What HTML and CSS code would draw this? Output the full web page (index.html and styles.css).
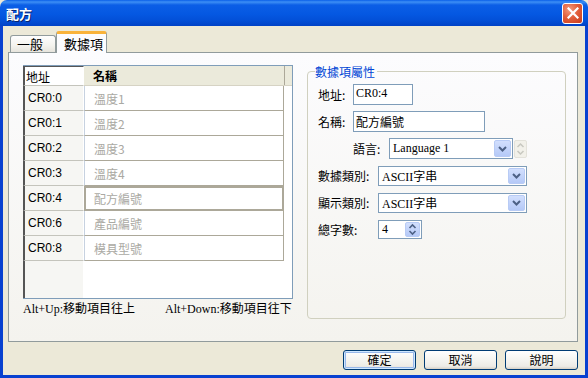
FILE: index.html
```html
<!DOCTYPE html>
<html lang="zh-TW">
<head>
    <meta charset="UTF-8">
    <title>配方</title>
    <link rel="stylesheet" href="styles.css">
</head>
<body>

<div class="window">
    <div class="titlebar">
        <span class="title">配方</span>
        <span class="close">
            <svg width="12" height="12" viewBox="0 0 12 12"><path d="M1.5 1.5 L10.5 10.5 M10.5 1.5 L1.5 10.5" stroke="#fff" stroke-width="2.2" stroke-linecap="square"/></svg>
        </span>
    </div>

    <div class="client">
        <div class="tabs">
            <div class="tab">一般</div>
            <div class="tab active">數據項</div>
        </div>

        <div class="panel">
            <div class="left">
                <div class="grid">
                    <div class="grow head">
                        <div class="c-addr">地址</div>
                        <div class="c-name">名稱</div>
                    </div>
                    <div class="grow"><div class="c-addr">CR0:0</div><div class="c-name">溫度1</div></div>
                    <div class="grow"><div class="c-addr">CR0:1</div><div class="c-name">溫度2</div></div>
                    <div class="grow"><div class="c-addr">CR0:2</div><div class="c-name">溫度3</div></div>
                    <div class="grow"><div class="c-addr">CR0:3</div><div class="c-name">溫度4</div></div>
                    <div class="grow sel"><div class="c-addr">CR0:4</div><div class="c-name">配方編號</div></div>
                    <div class="grow"><div class="c-addr">CR0:6</div><div class="c-name">產品編號</div></div>
                    <div class="grow"><div class="c-addr">CR0:8</div><div class="c-name">模具型號</div></div>
                    <div class="grow empty"><div class="c-addr"></div><div class="c-name"></div></div>
                </div>
                <div class="hints">
                    <span>Alt+Up:移動項目往上</span>
                    <span>Alt+Down:移動項目往下</span>
                </div>
            </div>

            <fieldset class="group">
                <legend>數據項屬性</legend>

                <div class="frow">
                    <span class="lbl">地址:</span>
                    <div class="box addr">CR0:4</div>
                </div>
                <div class="frow">
                    <span class="lbl">名稱:</span>
                    <div class="box name">配方編號</div>
                </div>
                <div class="frow indent">
                    <span class="lbl lang">語言:</span>
                    <div class="box combo lang-box">
                        <span class="val">Language 1</span>
                        <span class="drop"><svg width="9" height="6" viewBox="0 0 9 6"><path d="M1 1 L4.5 4.5 L8 1" fill="none" stroke="#4d6185" stroke-width="2"/></svg></span>
                    </div>
                    <div class="spin-off">
                        <svg width="9" height="14" viewBox="0 0 9 14"><path d="M1.5 5 L4.5 2 L7.5 5 M1.5 9 L4.5 12 L7.5 9" fill="none" stroke="#c8c8c0" stroke-width="1.5"/></svg>
                    </div>
                </div>
                <div class="frow">
                    <span class="lbl wide">數據類別:</span>
                    <div class="box combo type-box">
                        <span class="val">ASCII字串</span>
                        <span class="drop"><svg width="9" height="6" viewBox="0 0 9 6"><path d="M1 1 L4.5 4.5 L8 1" fill="none" stroke="#4d6185" stroke-width="2"/></svg></span>
                    </div>
                </div>
                <div class="frow">
                    <span class="lbl wide">顯示類別:</span>
                    <div class="box combo type-box">
                        <span class="val">ASCII字串</span>
                        <span class="drop"><svg width="9" height="6" viewBox="0 0 9 6"><path d="M1 1 L4.5 4.5 L8 1" fill="none" stroke="#4d6185" stroke-width="2"/></svg></span>
                    </div>
                </div>
                <div class="frow">
                    <span class="lbl wide">總字數:</span>
                    <div class="box combo count-box">
                        <span class="val">4</span>
                        <span class="drop spin"><svg width="9" height="13" viewBox="0 0 9 13"><path d="M1.5 5 L4.5 2 L7.5 5 M1.5 8 L4.5 11 L7.5 8" fill="none" stroke="#4d6185" stroke-width="1.6"/></svg></span>
                    </div>
                </div>
            </fieldset>
        </div>

        <div class="buttons">
            <button class="btn default">確定</button>
            <button class="btn">取消</button>
            <button class="btn">說明</button>
        </div>
    </div>
</div>

</body>
</html>
```

FILE: styles.css
```css
* {
    margin: 0;
    padding: 0;
    box-sizing: border-box;
}

body {
    background: #ece9d8;
    font-family: "Noto Sans CJK TC", "Liberation Sans", sans-serif;
    font-size: 12px;
    color: #000;
}

.window {
    width: 588px;
    height: 378px;
    display: flex;
    flex-direction: column;
}

/* Title bar */
.titlebar {
    height: 26px;
    display: flex;
    align-items: center;
    justify-content: space-between;
    padding: 0 5px 0 6px;
    background: linear-gradient(#0a5fe8 0, #3d8ff5 2px, #0b5ee6 5px, #0558e2 14px, #0350d8 20px, #0142c6 26px);
    border-radius: 7px 7px 0 0;
}

.title {
    color: #fff;
    font-weight: bold;
    font-size: 13px;
    line-height: 1;
    text-shadow: 1px 1px 0 #0a246a;
}

.close {
    width: 21px;
    height: 21px;
    display: flex;
    align-items: center;
    justify-content: center;
    border: 1px solid #fff;
    border-radius: 3px;
    background: radial-gradient(circle at 35% 30%, #f49b7e 0, #e2603c 45%, #c8391a 100%);
}

/* Client area */
.client {
    flex: 1;
    display: flex;
    flex-direction: column;
    background: #ece9d8;
    border-left: 3px solid #0841d0;
    border-right: 3px solid #0841d0;
    border-bottom: 3px solid #0841d0;
}

.tabs {
    display: flex;
    align-items: flex-end;
    height: 26px;
    padding: 5px 0 0 7px;
}

.tab {
    height: 17px;
    width: 46px;
    padding-left: 6px;
    line-height: 16px;
    font-size: 13px;
    border: 1px solid #919b9c;
    border-bottom: none;
    border-radius: 3px 3px 0 0;
    background: linear-gradient(#fefefe, #f4f3ee 60%, #e6e4dc);
}

.tab.active {
    position: relative;
    z-index: 1;
    height: 22px;
    width: 51px;
    margin-bottom: -1px;
    padding-left: 7px;
    line-height: 19px;
    background: #fcfcfe;
    border-top: 3px solid #f9b33a;
    border-radius: 3px 3px 0 0;
}

.panel {
    width: 570px;
    height: 290px;
    margin-left: 5px;
    display: flex;
    padding: 12px 0 0 14px;
    border: 1px solid #919b9c;
    background: linear-gradient(#fcfcfe, #f4f3ee);
}

/* Grid */
.left {
    width: 270px;
    display: flex;
    flex-direction: column;
}

.grid {
    height: 234px;
    display: flex;
    flex-direction: column;
    background: #fff;
    border: 1px solid #7f9db9;
    border-left: none;
}

.grow {
    display: flex;
    height: 25px;
}

.c-addr {
    width: 61px;
    padding-left: 3px;
    display: flex;
    align-items: center;
    font-family: "Liberation Sans", sans-serif;
    font-size: 12px;
    background: #f6f6f3;
    border-left: 2px solid #555;
    border-right: 1px solid #fff;
    border-bottom: 1px solid #c4c4bc;
}

.c-name {
    width: 200px;
    padding-left: 9px;
    display: flex;
    align-items: center;
    color: #aaa9a3;
    border-left: 1px solid #c7d2e0;
    border-right: 1px solid #aca899;
    border-bottom: 1px solid #aca899;
}

.grow.head {
    height: 20px;
}

.grow.head .c-addr {
    font-family: "Noto Sans CJK TC", sans-serif;
    padding-left: 1px;
    background: #fff;
    border-top: 1px solid #555;
    border-bottom: 1px solid #c4c4bc;
}

.grow.head .c-name {
    flex: 1;
    width: auto;
    color: #000;
    font-weight: bold;
    background: #ebeadb;
    border: none;
    border-bottom: 1px solid #d6d3c4;
    box-shadow: inset -7px 0 0 #ebeadb, inset -8px 0 0 #aca899;
}

.grow.sel .c-name {
    border: 2px solid #aca899;
    padding-left: 8px;
}

.grow.empty {
    flex: 1;
}

.grow.empty .c-addr {
    border-bottom: none;
}

.grow.empty .c-name {
    border: none;
}

.hints {
    display: flex;
    margin-top: 3px;
    font-family: "Liberation Serif", "Noto Sans CJK TC", serif;
    font-size: 12px;
    line-height: 14px;
}

.hints span:first-child {
    width: 142px;
}

/* Property group */
.group {
    width: 259px;
    height: 254px;
    margin-left: 14px;
    padding: 6px 10px 0 10px;
    border: 1px solid #d0d0bf;
    border-radius: 4px;
    display: flex;
    flex-direction: column;
    gap: 6px;
}

.group legend {
    color: #0046d5;
    font-size: 12px;
    line-height: 13px;
    margin-left: -3px;
    padding: 0 2px 0 0;
}

.frow {
    display: flex;
    align-items: center;
    height: 21px;
}

.frow.indent {
    padding-left: 35px;
}

.lbl {
    width: 35px;
    font-size: 12px;
}

.lbl.lang {
    width: 36px;
}

.lbl.wide {
    width: 60px;
}

.box {
    height: 21px;
    border: 1px solid #7f9db9;
    background: #fff;
    display: flex;
    align-items: center;
    padding-left: 2px;
    font-family: "Liberation Serif", "Noto Sans CJK TC", serif;
    font-size: 12px;
}

.box.addr {
    width: 60px;
    align-items: flex-start;
    padding-top: 1px;
}

.box.name {
    width: 132px;
    font-family: "Noto Sans CJK TC", sans-serif;
}

.combo {
    justify-content: space-between;
    padding: 1px;
    padding-left: 3px;
}

.lang-box {
    width: 124px;
}

.type-box {
    width: 149px;
    height: 20px;
}

.count-box {
    width: 44px;
    height: 19px;
}

.drop {
    width: 17px;
    height: 100%;
    display: flex;
    align-items: center;
    justify-content: center;
    border: 1px solid #b8cbf5;
    border-radius: 2px;
    background: linear-gradient(#d2dffd, #b5c9f7);
}

.drop.spin {
    width: 15px;
}

.spin-off {
    width: 13px;
    height: 18px;
    margin-left: 1px;
    display: flex;
    align-items: center;
    justify-content: center;
    border: 1px solid #e3e2da;
    border-radius: 2px;
    background: #f2f1ea;
}

/* Buttons */
.buttons {
    display: flex;
    justify-content: flex-end;
    gap: 8px;
    padding: 8px 7px 0 0;
}

.btn {
    width: 73px;
    height: 20px;
    font-family: "Noto Sans CJK TC", sans-serif;
    font-size: 12px;
    line-height: 1;
    border: 1px solid #003c74;
    border-radius: 3px;
    background: linear-gradient(#ffffff, #f4f4f0 50%, #ecebe6 85%, #d6d0c5);
}

.btn.default {
    box-shadow: inset 0 0 0 1px #cee7ff, inset 0 0 0 2px #98b8ea;
}
```
